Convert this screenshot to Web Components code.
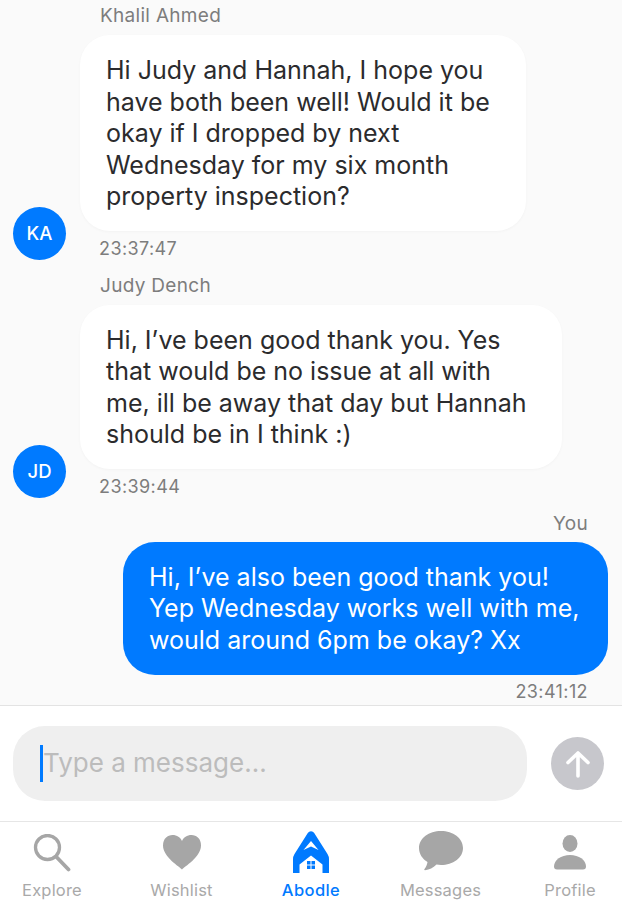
<!DOCTYPE html>
<html lang="en">
<head>
<meta charset="utf-8">
<title>Abodle chat</title>
<style>
  html, body { margin: 0; padding: 0; background: #fafafa; }
  body { font-family: Inter, "Liberation Sans", sans-serif; }
</style>
</head>
<body>
<chat-screen>
  <chat-message name="Khalil Ahmed" time="23:37:47" initials="KA" width="446">Hi Judy and Hannah, I hope you<br>have both been well! Would it be<br>okay if I dropped by next<br>Wednesday for my six month<br>property inspection?</chat-message>
  <chat-message name="Judy Dench" time="23:39:44" initials="JD" width="482">Hi, I’ve been good thank you. Yes<br>that would be no issue at all with<br>me, ill be away that day but Hannah<br>should be in I think :)</chat-message>
  <chat-message name="You" time="23:41:12" mine width="485">Hi, I’ve also been good thank you!<br>Yep Wednesday works well with me,<br>would around 6pm be okay? Xx</chat-message>

  <chat-composer slot="composer" placeholder="Type a message..."></chat-composer>

  <tab-bar slot="tabs">
    <tab-item label="Explore">
      <svg viewBox="0 0 38 38" width="38" height="38" fill="none" stroke="#a6a6a6"><circle cx="14.500" cy="13.500" r="12" stroke-width="3.300"/><path d="M23.500 23 L35.500 35.500" stroke-width="3.800" stroke-linecap="round"/></svg>
    </tab-item>
    <tab-item label="Wishlist">
      <svg viewBox="0 0 38 38" width="38" height="38"><path fill="#a6a6a6" d="M19 35.500 C17 33 0 23 0 11.500 C0 4.500 4.500 1 9.500 1 C14 1 17.500 3.500 19 7 C20.500 3.500 24 1 28.500 1 C33.500 1 38 4.500 38 11.500 C38 23 21 33 19 35.500 Z"/></svg>
    </tab-item>
    <tab-item label="Abodle" active>
      <svg viewBox="0 0 36 42" width="36" height="42" style="margin-top:-3px;margin-bottom:-1px"><path fill="#007aff" fill-rule="evenodd" d="M14.800 2 A3.800 3.800 0 0 1 21.200 2 L34.500 23 Q36 25.500 36 28 V42 H29.500 V33.500 L18 24.500 L6.500 33.500 V42 H0 V28 Q0 25.500 1.500 23 Z M18 10 L10.500 19 L18 15.500 L25.500 19 Z"/><path fill="#007aff" d="M14 30h3.500v3.500H14zM18.500 30H22v3.500h-3.500zM14 34.500h3.500V38H14zM18.500 34.500H22V38h-3.500z"/></svg>
    </tab-item>
    <tab-item label="Messages">
      <svg viewBox="0 0 44 40" width="44" height="40" style="margin-top:-4px"><path fill="#a6a6a6" d="M22 0 C34 0 44 7 44 17 C44 27 34 34 22 34 C20.500 34 19 33.900 17.500 33.600 C14 37 10.500 38.800 6 39.200 C5.200 39.200 5 38.600 5.500 38 C7 36 8.200 33.500 8.500 31 C3.500 28 0 23 0 17 C0 7 10 0 22 0 Z"/></svg>
    </tab-item>
    <tab-item label="Profile">
      <svg viewBox="0 0 32 38" width="32" height="38"><ellipse cx="16" cy="9.500" rx="7.500" ry="8.500" fill="#a6a6a6"/><path fill="#a6a6a6" d="M0 32.500 C0 26 7 21 16 21 C25 21 32 26 32 32.500 C32 34.500 31 35.500 29 35.500 H3 C1 35.500 0 34.500 0 32.500 Z"/></svg>
    </tab-item>
  </tab-bar>
</chat-screen>

<script>
class ChatScreen extends HTMLElement {
  constructor() {
    super();
    this.attachShadow({ mode: 'open' });
    this.shadowRoot.innerHTML = `
      <style>
        :host { display: flex; flex-direction: column; width: 622px; height: 914px; overflow: hidden; background: #fafafa; }
        .messages { flex: 1; min-height: 0; display: flex; flex-direction: column; gap: 14px; padding-top: 4px; box-sizing: border-box; }
      </style>
      <div class="messages"><slot></slot></div>
      <slot name="composer"></slot>
      <slot name="tabs"></slot>
    `;
  }
}

class ChatMessage extends HTMLElement {
  constructor() {
    super();
    this.attachShadow({ mode: 'open' });
  }

  connectedCallback() {
    const mine = this.hasAttribute('mine');
    const initials = this.getAttribute('initials');
    this.shadowRoot.innerHTML = `
      <style>
        :host { display: flex; align-items: flex-end; gap: 14px; padding: 0 14px 0 13px; }
        :host([mine]) { justify-content: flex-end; }
        .avatar {
          width: 53px; height: 53px; border-radius: 50%; flex: none;
          background: #007aff; color: #fff;
          display: flex; align-items: center; justify-content: center;
          font-size: 18.5px; font-weight: 500;
        }
        .body { display: flex; flex-direction: column; align-items: flex-start; }
        :host([mine]) .body { align-items: flex-end; }
        .name { font-size: 19px; line-height: 24px; color: #7d7d7d; letter-spacing: 0.3px; padding-left: 20px; margin-bottom: 7px; }
        .time { font-size: 18px; line-height: 22px; color: #7d7d7d; letter-spacing: 0.4px; padding-left: 19px; margin-top: 7px; }
        :host([mine]) .name { padding: 0 20px 0 0; margin-bottom: 6px; }
        :host([mine]) .time { padding: 0 20px 0 0; margin-top: 6px; }
        .bubble {
          width: ${this.getAttribute('width')}px; box-sizing: border-box;
          padding: 20px 20px 18px 26px;
          background: #fff; color: #2b2b2d; border-radius: 30px;
          font-size: 25px; line-height: 31.5px; white-space: nowrap;
          box-shadow: 0 1px 3px rgba(0,0,0,.03);
        }
        :host([mine]) .bubble { background: #007aff; color: #fff; box-shadow: none; border-radius: 32px; padding-bottom: 19px; }
      </style>
      ${mine ? '' : `<div class="avatar">${initials}</div>`}
      <div class="body">
        <div class="name">${this.getAttribute('name')}</div>
        <div class="bubble"><slot></slot></div>
        <div class="time">${this.getAttribute('time')}</div>
      </div>
    `;
  }
}

class ChatComposer extends HTMLElement {
  constructor() {
    super();
    this.attachShadow({ mode: 'open' });
  }

  connectedCallback() {
    this.shadowRoot.innerHTML = `
      <style>
        :host { display: flex; align-items: center; gap: 24px; flex: none; height: 117px; box-sizing: border-box; padding: 20px 18px 20px 13px; background: #fff; border-top: 1px solid #e3e3e3; border-bottom: 1px solid #e6e6e6; }
        .field { flex: 1; height: 75px; box-sizing: border-box; border-radius: 32px; background: #efefef; display: flex; align-items: center; padding-left: 27px; }
        .caret { width: 3px; height: 37px; background: #007aff; flex: none; }
        .placeholder { font-size: 26px; color: #bcbcbc; margin-top: -2px; }
        .send { width: 53px; height: 53px; border-radius: 50%; background: #c7c7cc; flex: none; display: flex; align-items: center; justify-content: center; }
      </style>
      <div class="field"><span class="caret"></span><span class="placeholder">${this.getAttribute('placeholder')}</span></div>
      <div class="send">
        <svg viewBox="0 0 24 28" width="24" height="28" fill="none" stroke="#fff" stroke-width="3.600" stroke-linecap="round" stroke-linejoin="round"><path d="M12 26 V3 M2 12.500 L12 3 L22 12.500"/></svg>
      </div>
    `;
  }
}

class TabBar extends HTMLElement {
  constructor() {
    super();
    this.attachShadow({ mode: 'open' });
    this.shadowRoot.innerHTML = `
      <style>
        :host { display: grid; grid-template-columns: repeat(5, 60px); column-gap: 69.5px; flex: none; height: 92px; box-sizing: border-box; padding: 12px 0 0 22px; background: #fff; }
      </style>
      <slot></slot>
    `;
  }
}

class TabItem extends HTMLElement {
  constructor() {
    super();
    this.attachShadow({ mode: 'open' });
  }

  connectedCallback() {
    this.shadowRoot.innerHTML = `
      <style>
        :host { display: flex; flex-direction: column; align-items: center; color: #a9a9a9; }
        :host([active]) { color: #007aff; }
        .icon { height: 38px; display: flex; align-items: center; justify-content: center; }
        .label { margin-top: 8px; font-size: 16.5px; line-height: 20px; white-space: nowrap; letter-spacing: 0.2px; }
        :host([active]) .label { font-weight: 500; letter-spacing: 0.4px; }
      </style>
      <div class="icon"><slot></slot></div>
      <div class="label">${this.getAttribute('label')}</div>
    `;
  }
}

customElements.define('chat-screen', ChatScreen);
customElements.define('chat-message', ChatMessage);
customElements.define('chat-composer', ChatComposer);
customElements.define('tab-bar', TabBar);
customElements.define('tab-item', TabItem);
</script>
</body>
</html>
